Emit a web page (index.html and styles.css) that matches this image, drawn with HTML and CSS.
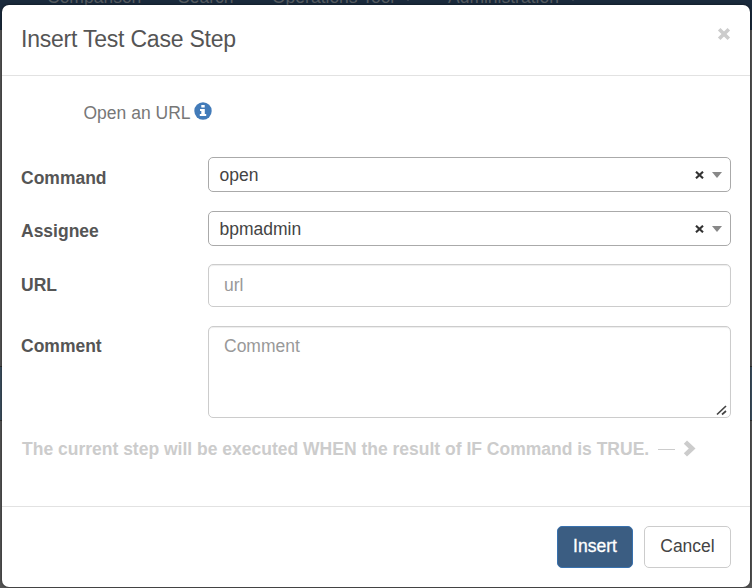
FILE: index.html
```html
<!DOCTYPE html>
<html lang="en">
<head>
<meta charset="utf-8">
<title>Insert Test Case Step</title>
<link rel="stylesheet" href="styles.css">
</head>
<body>
<nav class="navbar">
  <span class="comparison">Comparison</span>
  <span class="search">Search</span>
  <span class="operations">Operations Tool <i class="caret"></i></span>
  <span>Administration <i class="caret"></i></span>
</nav>
<div class="backdrop-page"><div class="selected-row"></div></div>
<div class="modal">
  <header class="modal-header">
    <h4>Insert Test Case Step</h4>
    <svg class="close" width="14" height="14" viewBox="0 0 14 14"><path d="M2.2 2.2 11.8 11.8M11.8 2.2 2.2 11.8"/></svg>
  </header>
  <main class="modal-body">
    <p class="hint"><span>Open an URL</span>
      <svg width="18" height="18" viewBox="0 0 18 18"><circle cx="9" cy="9" r="8.7" fill="#427bb9"/><path fill="#fff" d="M7.3 3h3.4v2.6H7.3zM6 7.1h4.8v5h1.4v2H5.8v-2h1.5V9H6z"/></svg>
    </p>
    <div class="row select-row">
      <label>Command</label>
      <div class="select"><span>open</span><svg class="clear" width="9" height="8" viewBox="0 0 9 8"><path d="M1 .7 8 7.3M8 .7 1 7.3"/></svg><i class="arrow"></i></div>
    </div>
    <div class="row select-row">
      <label>Assignee</label>
      <div class="select"><span>bpmadmin</span><svg class="clear" width="9" height="8" viewBox="0 0 9 8"><path d="M1 .7 8 7.3M8 .7 1 7.3"/></svg><i class="arrow"></i></div>
    </div>
    <div class="row url-row">
      <label>URL</label>
      <input class="control" type="text" placeholder="url">
    </div>
    <div class="row comment-row">
      <label>Comment</label>
      <div class="area">
        <textarea class="control" placeholder="Comment"></textarea>
        <svg class="grip" width="12" height="11" viewBox="0 0 12 11"><path d="M1 9.5 10 1M6 9.5 10 6"/></svg>
      </div>
    </div>
    <div class="condition">
      <span>The current step will be executed WHEN the result of IF Command is TRUE.</span>
      <i class="dash"></i>
      <svg width="13" height="17" viewBox="0 0 13 17"><path fill="#ccc" d="M4 .5 12.5 8.5 4 16.5.8 13.3 5.8 8.5.8 3.7z"/></svg>
    </div>
  </main>
  <footer class="modal-footer">
    <button class="btn primary">Insert</button>
    <button class="btn">Cancel</button>
  </footer>
</div>
</body>
</html>
```
FILE: styles.css
```css
* { box-sizing: border-box; }
body {
  margin: 0;
  width: 752px;
  height: 588px;
  overflow: hidden;
  position: relative;
  background: #555;
  color: #555;
  font: 17.5px/25px "Liberation Sans", Arial, sans-serif;
}
.navbar {
  display: flex;
  height: 30px;
  padding-left: 47px;
  background: #1a2a3c;
  color: #555b60;
  line-height: 20px;
  white-space: nowrap;
}
.navbar span { margin-top: -13px; }
.comparison { width: 131px; }
.search { width: 94px; }
.operations { width: 176px; }
.caret {
  display: inline-block;
  margin: 0 0 0 4px;
  border: 5px solid transparent;
  border-top-color: #4c535a;
  border-bottom: 0;
  vertical-align: middle;
}
.backdrop-page { height: 558px; padding-top: 336px; }
.selected-row { height: 55px; background: #3d5060; border: solid #333; border-width: 1px 0; }
.modal {
  position: absolute;
  left: 2px;
  top: 5px;
  width: 748px;
  height: 582px;
  background: #fff;
  border-radius: 7px;
  box-shadow: 0 0 3px rgba(0, 0, 0, .6);
}
.modal-header {
  display: flex;
  justify-content: space-between;
  height: 71px;
  padding: 18px 19.5px 0 19px;
  border-bottom: 1px solid #e2e2e2;
}
h4 { margin: 0; font-size: 23px; line-height: 32px; font-weight: 400; letter-spacing: -.22px; }
.close { margin-top: 3.5px; stroke: #ccc; stroke-width: 3.6; }
.modal-body { height: 430px; padding: 25px 19px 0; }
.hint {
  display: flex;
  align-items: center;
  gap: 3.5px;
  height: 25px;
  margin: 0 0 31px 62.5px;
  color: #777;
}
.hint svg { margin-top: -6px; }
.row { display: grid; grid-template-columns: 187px 523px; }
label { font-weight: 700; color: #555; }
.select-row { height: 54px; }
.select-row label { padding-top: 9px; }
.select-row + .select-row label { padding-top: 8px; }
.select {
  display: flex;
  align-items: center;
  height: 35px;
  padding: 0 8px 0 10.5px;
  border: 1px solid #aaa;
  border-radius: 5px;
  color: #444;
}
.select span { flex: 1; padding-top: 2px; }
.clear { stroke: #333; stroke-width: 2.1; margin-right: 8px; }
.arrow { border: 5px solid transparent; border-top: 6px solid #888; border-bottom: 0; }
.url-row { height: 61px; margin-top: -1px; }
.url-row label { padding-top: 9px; }
.control {
  display: block;
  width: 523px;
  height: 43px;
  margin: 0;
  padding: 7px 15px;
  border: 1px solid #ccc;
  border-radius: 5px;
  box-shadow: inset 0 1px 1px rgba(0, 0, 0, .075);
  background: #fff;
  font: inherit;
  resize: none;
}
.control::placeholder { color: #999; opacity: 1; }
.comment-row { height: 92px; margin-top: 1px; }
.comment-row label { padding-top: 8px; }
.area { position: relative; height: 92px; }
.area .control { height: 92px; }
.grip { position: absolute; right: 3px; bottom: 2.5px; fill: none; stroke: #444; stroke-width: 1.7; }
.condition {
  display: flex;
  align-items: center;
  height: 25px;
  margin-top: 19px;
  padding-left: 1px;
  color: #ccc;
  font-weight: 700;
  white-space: nowrap;
}
.dash { width: 17px; height: 1px; margin: 0 8px 0 9px; background: #ccc; }
.condition svg { margin-top: -3px; }
.modal-footer {
  display: flex;
  justify-content: flex-end;
  gap: 11px;
  height: 81px;
  padding: 19px 19px 0;
  border-top: 1px solid #e2e2e2;
}
.btn {
  width: 87px;
  height: 42px;
  padding: 0 0 2px;
  border: 1px solid #ccc;
  border-radius: 5px;
  background: #fff;
  color: #444;
  font: inherit;
}
.btn.primary { width: 76px; background: #3b5d82; border-color: #3871ae; color: #fff; -webkit-text-stroke: .3px #fff; }
```
